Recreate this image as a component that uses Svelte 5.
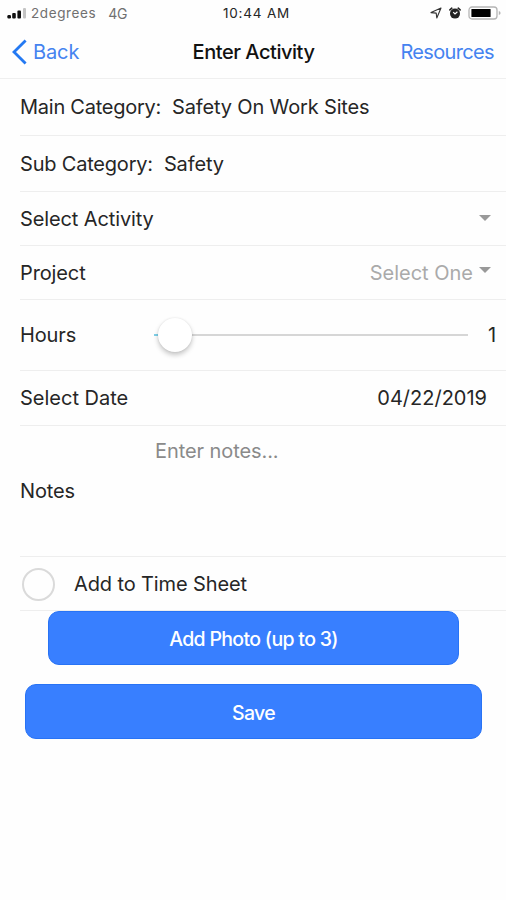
<script lang="ts">
	let hours = $state(1)
	let notes = $state('')
	let addToTimeSheet = $state(false)

	const minHours = 1
	const maxHours = 24
	const thumbOffset = $derived(((hours - minHours) / (maxHours - minHours)) * 276)
</script>

<div class="screen">
	<div class="status-bar">
		<div class="carrier">
			<svg class="signal" width="19" height="11" viewBox="0 0 19 11">
				<rect x="0.4" y="7" width="3.6" height="3.4" rx="1.2" />
				<rect x="5.2" y="5" width="3.6" height="5.4" rx="1" />
				<rect x="10.4" y="2.4" width="3.6" height="8" rx="1" />
				<rect class="off" x="16" y="0" width="3" height="10.4" rx="1" />
			</svg>
			<span class="operator">2degrees</span>
			<span class="network">4G</span>
		</div>
		<span class="clock">10:44 AM</span>
		<div class="indicators">
			<svg width="12" height="12" viewBox="0 0 12 12">
				<path d="M1 5.6 11 1 6.8 11 6.2 6.1Z" fill="none" stroke="#333" stroke-width="1.1" stroke-linejoin="round" />
			</svg>
			<svg width="12" height="12" viewBox="0 0 12 12">
				<circle cx="6" cy="6.6" r="5" fill="#222" />
				<path d="M.9 2.9 2.8 1.2M11.1 2.9 9.2 1.2" stroke="#222" stroke-width="1.6" stroke-linecap="round" />
				<path d="M4.2 5.2 6 7 8.4 4.8" fill="none" stroke="#fff" stroke-width="1.2" />
			</svg>
			<svg width="33" height="14" viewBox="0 0 33 14">
				<rect x="1" y="1" width="28" height="12" rx="3" fill="#fff" stroke="#b5b5b5" stroke-width="1.3" />
				<rect x="3.4" y="3" width="19.2" height="8" rx="0.6" fill="#000" />
				<path d="M30.8 5v4q1.8-.6 1.8-2t-1.8-2Z" fill="#b5b5b5" />
			</svg>
		</div>
	</div>

	<header class="nav">
		<button class="back" type="button">
			<svg width="16" height="26" viewBox="0 0 16 26">
				<path d="M14.6 1.4 3 13l11.6 11.6" fill="none" stroke="#2479f2" stroke-width="2.8" />
			</svg>
			<span>Back</span>
		</button>
		<h1>Enter Activity</h1>
		<button class="resources" type="button">Resources</button>
	</header>

	<main>
		<div class="row main-category">
			<span class="main-label">Main Category:</span>
			<span class="main-value">Safety On Work Sites</span>
		</div>
		<div class="row sub-category">
			<span class="sub-label">Sub Category:</span>
			<span class="sub-value">Safety</span>
		</div>
		<div class="row activity">
			<span class="activity-label">Select Activity</span>
			<span class="caret"></span>
		</div>
		<div class="row project">
			<span class="project-label">Project</span>
			<span class="placeholder">Select One</span>
			<span class="caret raised"></span>
		</div>
		<div class="row hours">
			<span class="label">Hours</span>
			<div class="slider">
				<div class="filled"></div>
				<div class="thumb" style="margin-left: {thumbOffset}px"></div>
			</div>
			<span class="amount">{hours}</span>
		</div>
		<div class="row date">
			<span class="date-label">Select Date</span>
			<span class="date-value">04/22/2019</span>
		</div>
		<div class="row notes">
			<label for="notes">Notes</label>
			<textarea id="notes" placeholder="Enter notes..." bind:value={notes}></textarea>
		</div>
		<div class="row time-sheet">
			<button
				type="button"
				class="check"
				class:checked={addToTimeSheet}
				aria-label="Add to Time Sheet"
				onclick={() => (addToTimeSheet = !addToTimeSheet)}
			></button>
			<span class="sheet-label">Add to Time Sheet</span>
		</div>

		<div class="actions">
			<button class="primary photo" type="button"><span>Add Photo (up to 3)</span></button>
			<button class="primary save" type="button"><span>Save</span></button>
		</div>
	</main>
</div>

<style>
	:global(body) {
		background: #fefefe;
	}

	.screen {
		height: 900px;
		overflow: hidden;
		font-family: Inter, "Liberation Sans", sans-serif;
		font-size: 20px;
		letter-spacing: -0.12px;
		color: #262626;
		white-space: nowrap;
	}

	button {
		padding: 0;
		border: 0;
		background: none;
		font: inherit;
		letter-spacing: inherit;
		cursor: pointer;
	}

	svg {
		display: block;
		flex: none;
	}

	.status-bar,
	.nav {
		display: grid;
		grid-template-columns: 1fr auto 1fr;
		align-items: center;
	}

	.status-bar {
		height: 26px;
		padding: 0 5px 0 7px;
		font-size: 13.5px;
	}

	.carrier {
		display: flex;
		align-items: center;
		color: #707070;
	}

	.signal {
		margin-right: 5px;
		fill: #111;
	}

	.signal .off {
		fill: #c4c4c4;
	}

	.operator {
		letter-spacing: 0.6px;
	}

	.network {
		margin-left: 12px;
		font-size: 14px;
	}

	.clock {
		margin-left: 5px;
		letter-spacing: 0.8px;
	}

	.indicators {
		display: flex;
		align-items: center;
		justify-content: flex-end;
		gap: 7px;
	}

	.nav {
		height: 52px;
		padding: 0 12px 0 11px;
		border-bottom: 1px solid #efefef;
	}

	.nav button {
		color: #4583f0;
	}

	.back {
		display: flex;
		align-items: center;
		gap: 6px;
		justify-self: start;
	}

	.resources {
		justify-self: end;
		letter-spacing: -0.65px;
	}

	h1 {
		margin: 0 0 0 2px;
		font-size: 20px;
		font-weight: 500;
		letter-spacing: -0.45px;
		color: #111;
	}

	.row {
		display: flex;
		align-items: center;
		box-sizing: border-box;
		margin-left: 20px;
		border-bottom: 1px solid #eee;
	}

	.main-category {
		height: 57px;
		gap: 11px;
	}

	.main-label {
		letter-spacing: -0.25px;
	}

	.main-value {
		letter-spacing: -0.15px;
	}

	.sub-category {
		height: 56px;
		gap: 11px;
	}

	.sub-label {
		letter-spacing: -0.2px;
	}

	.activity,
	.project,
	.time-sheet {
		height: 54px;
	}

	.activity,
	.project {
		padding-right: 15px;
	}

	.caret {
		margin-left: auto;
		border: 6px solid transparent;
		border-top-color: #999;
		border-bottom: 0;
	}

	.activity .caret {
		margin-bottom: 2px;
	}

	.caret.raised {
		margin: 0 0 6px 6px;
	}

	.placeholder {
		margin-left: auto;
		letter-spacing: 0;
		color: #aaa;
	}

	.hours {
		height: 71px;
	}

	.hours .label {
		width: 134px;
	}

	.slider {
		display: flex;
		align-items: center;
		width: 314px;
		height: 2px;
		background: #d6d6d6;
	}

	.filled {
		width: 4px;
		height: 2px;
		background: #7fd0e8;
	}

	.thumb {
		width: 34px;
		height: 34px;
		border-radius: 50%;
		background: #fff;
		box-shadow: 0 3px 5px rgba(0, 0, 0, 0.22), 0 0 2px rgba(0, 0, 0, 0.1);
	}

	.amount {
		margin-left: 20px;
	}

	.date {
		justify-content: space-between;
		height: 55px;
		padding-right: 19px;
	}

	.date-label,
	.date-value {
		letter-spacing: 0;
	}

	.notes {
		height: 131px;
	}

	.notes label {
		width: 135px;
	}

	textarea {
		width: 320px;
		height: 108px;
		padding: 0;
		border: 0;
		outline: none;
		resize: none;
		background: none;
		font: inherit;
		letter-spacing: -0.08px;
		line-height: 28px;
	}

	textarea::placeholder {
		color: #8a8a8a;
		opacity: 1;
	}

	.check {
		box-sizing: border-box;
		width: 33px;
		height: 33px;
		margin: 1px 19px 0 2px;
		border: 2px solid #dadada;
		border-radius: 50%;
	}

	.check.checked {
		background: #387ef9;
	}

	.actions {
		display: flex;
		flex-direction: column;
		gap: 19px;
	}

	.primary {
		height: 54px;
		padding-top: 2px;
		border: 1px solid #2873f5;
		border-radius: 11px;
		background: #387fff;
		color: #fff;
		font-size: 19.5px;
		font-weight: 500;
		letter-spacing: -0.67px;
	}

	.photo {
		margin: 0 47px 0 48px;
	}

	.save {
		height: 55px;
		margin: 0 24px 0 25px;
	}
</style>
